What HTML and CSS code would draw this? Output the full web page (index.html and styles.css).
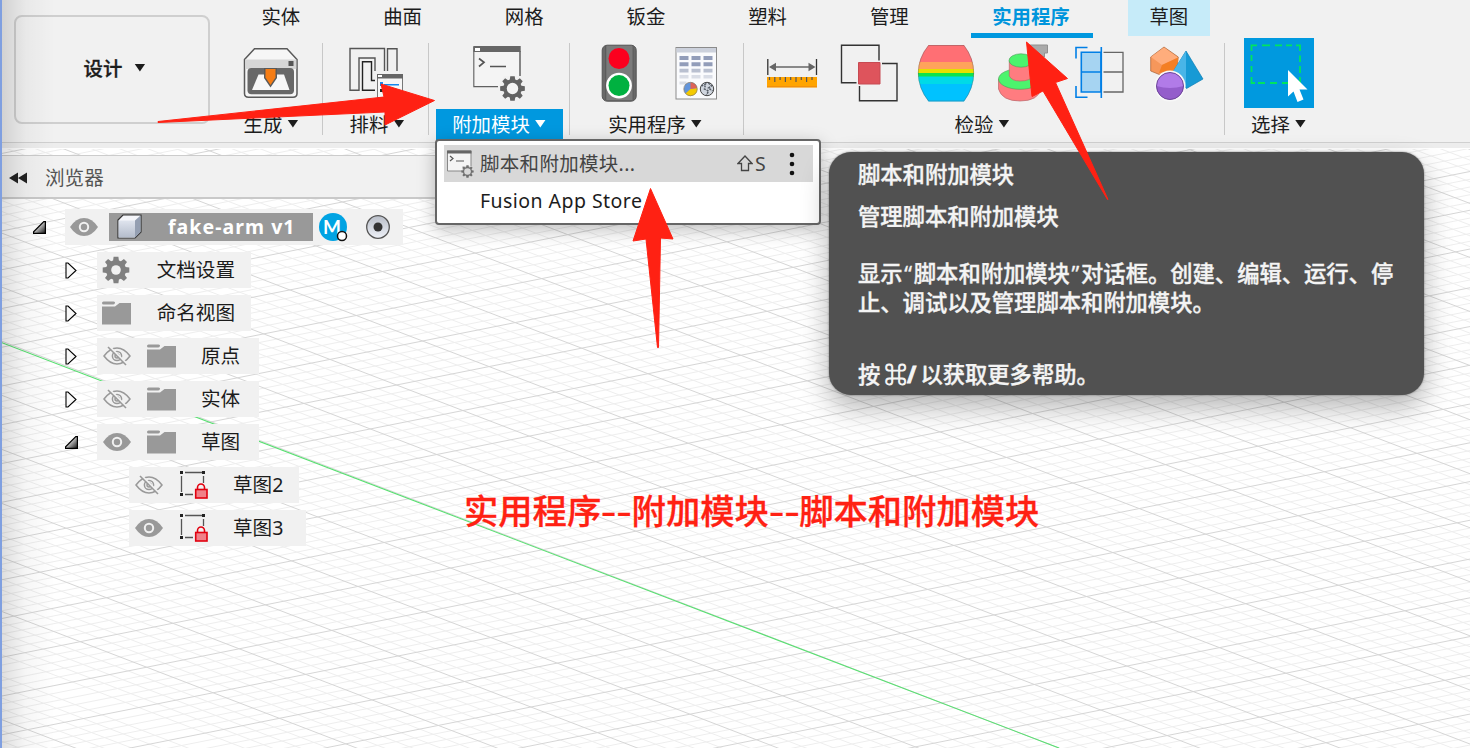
FILE: index.html
```html
<!DOCTYPE html>
<html lang="zh-CN">
<head>
<meta charset="utf-8">
<title>fake-arm v1</title>
<link rel="stylesheet" href="styles.css">
</head>
<body>
<svg width="0" height="0" class="defs">
  <defs>
    <linearGradient id="cubeFace" x1="0" y1="0" x2="0" y2="1"><stop offset="0" stop-color="#dfe4ee"/><stop offset="1" stop-color="#b4bccb"/></linearGradient>
    <linearGradient id="knob" x1="0" y1="0" x2="0" y2="1"><stop offset="0" stop-color="#b9bec8"/><stop offset="1" stop-color="#eef1f8"/></linearGradient>
    <linearGradient id="wedge" x1="0" y1="0" x2="1" y2="1"><stop offset="0.3" stop-color="#eee"/><stop offset="1" stop-color="#111"/></linearGradient>
    <symbol id="eye" viewBox="0 0 28 18"><path d="M0 9Q6 0 14 0T28 9Q22 18 14 18T0 9Z" fill="#999"/><circle cx="14" cy="9" r="4.2" fill="#999" stroke="#f1f1f1" stroke-width="2"/></symbol>
    <symbol id="eyeOff" viewBox="0 0 28 20"><g fill="none" stroke="#999" stroke-width="1.5"><path d="M1 10Q7 2 14 2T27 10Q21 18 14 18T1 10Z"/><circle cx="14" cy="10" r="4.6"/><circle cx="14" cy="10" r="2" /></g><path d="M6.5 0.5L24.5 18.5" stroke="#f1f1f1" stroke-width="2"/><path d="M5 1L23 19" stroke="#999" stroke-width="1.6"/></symbol>
    <symbol id="folder" viewBox="0 0 29 24"><path d="M1.5 0.5H11.5Q13.5 0.5 13 2Q12.500 3.500 11 3.500H1.500Q0 3.500 0 2Q0 0.500 1.500 0.500Z" fill="#999"/><path d="M0 5.500H13L17.500 2H29V23.500H0Z" fill="#999"/></symbol>
    <symbol id="closed" viewBox="0 0 12 17"><path d="M1 1H3L11 8.500L3 16H1Z" fill="#f8f8f8" stroke="#000" stroke-width="1.100"/></symbol>
    <symbol id="open" viewBox="0 0 13 13"><path d="M12.400 0.600V12.400H0.600V10.800L10.800 0.600Z" fill="url(#wedge)" stroke="#000" stroke-width="1.200"/></symbol>
    <symbol id="sketch" viewBox="0 0 30 30"><g stroke="#555" stroke-width="1.300" fill="none"><path d="M6 2.500H24M2.500 6V22M24.500 6V13M6 24.500H14"/></g><path d="M1 1h3v3h-3zM23 1h3v3h-3zM1 23h3v3h-3z" fill="#222"/><path d="M18.500 19V17.500a3.500 3.500 0 0 1 7 0V19" fill="none" stroke="#e2000f" stroke-width="1.600"/><rect x="16.700" y="19.500" width="11.300" height="8.500" fill="#f08088" stroke="#e2000f" stroke-width="1.600"/></symbol>
    <symbol id="gear" viewBox="-14 -14 28 28"><path d="M-2.400-13.300H2.400L2.900-9.600L4.900-8.800L7.900-11L11-7.900L8.800-4.900L9.600-2.900L13.300-2.400V2.400L9.600 2.900L8.800 4.900L11 7.900L7.900 11L4.900 8.800L2.900 9.600L2.400 13.300H-2.400L-2.900 9.600L-4.900 8.800L-7.900 11L-11 7.900L-8.800 4.900L-9.600 2.900L-13.300 2.400V-2.400L-9.600-2.900L-8.800-4.900L-11-7.900L-7.900-11L-4.900-8.800L-2.900-9.600Z"/></symbol>
  </defs>
</svg>

<main class="app">
  <svg class="grid" id="grid" width="1470" height="748" viewBox="0 0 1470 748"></svg>

  <header class="ribbon">
    <button class="workspace">设计 <i class="caret"></i></button>
    <div class="ribbon-body">
      <nav class="tabs">
        <span class="tab">实体</span><span class="tab">曲面</span><span class="tab">网格</span><span class="tab">钣金</span><span class="tab">塑料</span><span class="tab">管理</span><span class="tab active">实用程序</span><span class="tab context">草图</span>
      </nav>
      <div class="groups">
        <section class="group make">
          <div class="icons">
            <svg class="icon" viewBox="240 38 60 70"><path d="M244.500 59.500L254.500 48.700H287L297 59.500V93.500Q297 97.200 293 97.200H248.500Q244.500 97.200 244.500 93.500Z" fill="#f6f6f6" stroke="#595959" stroke-width="1.500"/><path d="M245.200 59.500H296.300V69H245.200Z" fill="#d6d6d6"/><path d="M288.500 61H293.500V66H288.500Z" fill="#555"/><rect x="247.500" y="68" width="46.500" height="26.300" rx="4" fill="#686868"/><path d="M258.500 74.500H284L289.500 90H252Z" fill="#f7f7f7"/><path d="M264 68H277V78L270.500 87.500L264 78Z" fill="#595959"/><path d="M265.500 69H275.500V77.500L270.500 85L265.500 77.500Z" fill="#f57c14"/></svg>
          </div>
          <div class="label">生成<i class="caret"></i></div>
        </section>
        <section class="group nest">
          <div class="icons">
            <svg class="icon" viewBox="346 38 60 70"><g fill="none" stroke="#555" stroke-width="1.400"><path d="M384.500 71V48.500H350V90.300H359V58H375V71"/><path d="M375 90.300H362.500V61.700H371.500V80.500H375" stroke="#222"/><path d="M387.500 71V48.700H397V71" /></g><rect x="377.500" y="74.500" width="25" height="23" fill="#f7f7f7" stroke="#777"/><path d="M377 74H403V78.500H377Z" fill="#666"/><path d="M378 75h4v2h-4z" fill="#fff"/><path d="M380 82H383V86H380ZM384 84H399V85.500H384Z" fill="#1588ee"/><path d="M380 89h3v3h-3z" fill="#222"/></svg>
          </div>
          <div class="label">排料<i class="caret"></i></div>
        </section>
        <section class="group addins">
          <div class="icons">
            <svg class="icon" viewBox="470 38 60 70"><path d="M475 46.500V86.500H499" fill="none" stroke="#606060" stroke-width="1.500"/><path d="M475.500 51H521V76H505L500 86H475.500Z" fill="#f4f4f4"/><path d="M521 51V76" stroke="#606060" stroke-width="1.500"/><path d="M474.500 46H521.700V52H474.500Z" fill="#666"/><path d="M476 48h5v3h-5z" fill="#fff"/><path d="M480 58.500L485 62.300L480 66.500" fill="none" stroke="#555" stroke-width="1.700"/><path d="M491 66.500H507" stroke="#555" stroke-width="1.500"/><use href="#gear" x="500.500" y="75.500" width="26" height="26" fill="#636363"/><circle cx="513.500" cy="88.500" r="5.700" fill="#f4f4f4"/></svg>
          </div>
          <div class="label open">附加模块<i class="caret"></i></div>
        </section>
        <section class="group utility">
          <div class="icons">
            <svg class="icon" viewBox="589.500 38 60 70"><rect x="602.700" y="45.200" width="34" height="56" rx="5" fill="#696969" stroke="#555"/><path d="M606 46V100M633.500 46V100" stroke="#5b5b5b"/><path d="M607 46H633V100H607Z" fill="#7b7b7b"/><circle cx="619.500" cy="58.500" r="10.500" fill="#fb001e"/><circle cx="619.500" cy="85.600" r="12.900" fill="#fff"/><circle cx="619.500" cy="85.600" r="10.500" fill="#00b140"/></svg>
            <svg class="icon" viewBox="666.500 38 60 70"><rect x="676.500" y="47.500" width="40.500" height="51.500" fill="#fafbfd" stroke="#8b8b8b"/><path d="M677 48H716.500V52.500H677Z" fill="#ccd1dc"/><path d="M680 56h9v4h-9zM692 56h9v4h-9zM704 56h9v4h-9zM680 62.300h9v4h-9zM692 62.300h9v4h-9zM704 62.300h9v4h-9z" fill="#929db9"/><path d="M680 68.700h9v3.700h-9zM692 68.700h9v3.700h-9zM704 68.700h9v3.700h-9z" fill="#b9c0d0"/><path d="M680 75h9v3.500h-9zM692 75h9v3.500h-9zM704 75h9v3.500h-9zM680 81.500h7v3h-7z" fill="#d9dde6"/><circle cx="691" cy="89" r="6.700" fill="#6295dc"/><path d="M691 89L697.700 88A6.700 6.700 0 0 1 686 93.600Z" fill="#f4ca00"/><path d="M691 89V82.300A6.700 6.700 0 0 1 697.700 88Z" fill="#df6257"/><circle cx="691" cy="89" r="6.700" fill="none" stroke="#8b7c66" stroke-width="0.700"/><circle cx="707.500" cy="89" r="6.700" fill="#d0d6df" stroke="#444"/><path d="M702 86L706 84L705 89L709 91L707 95M709 83L712 86L709 88L713 91" fill="none" stroke="#555c66" stroke-width="1.500" stroke-dasharray="2 1"/></svg>
          </div>
          <div class="label">实用程序<i class="caret"></i></div>
        </section>
        <section class="group inspect">
          <div class="icons">
            <svg class="icon" viewBox="763 38 60 70"><path d="M768.800 59V75M817.500 59V75" stroke="#333" stroke-width="1.300"/><path d="M772 67H814" stroke="#666" stroke-width="1.500"/><path d="M770 67L777 62.700V71.300ZM816.500 67L809.500 62.700V71.300Z" fill="#666"/><path d="M768 77H818V87.500H768Z" fill="#ffa400"/><path d="M768 86.700H818" stroke="#ee8c12"/><path d="M770.500 77v3M775.800 77v5M781.100 77v3M786.400 77v5M791.700 77v3M797 77v5M802.300 77v3M807.600 77v5M813 77v3" stroke="#555" stroke-width="1.200"/></svg>
            <svg class="icon" viewBox="840 38 60 70"><path d="M857.500 82.800H842.500V45.300H880V60.500M883 63.500H898V100.700H860.500V86" fill="none" stroke="#333" stroke-width="1.400"/><path d="M859.500 62.500H881V84H859.500Z" fill="#de545c" stroke="#c74a52"/></svg>
            <svg class="icon" viewBox="917 38 60 70"><clipPath id="barrel"><path d="M929.500 45H965Q975 58 975 73Q975 88 965 101.500H929.500Q919 88 919 73Q919 58 929.500 45Z"/></clipPath><g clip-path="url(#barrel)"><path d="M917 45h60v18h-60z" fill="#ff6f74"/><path d="M917 62h60v8h-60z" fill="#ffa35b"/><path d="M917 69h60v5h-60z" fill="#e5e000"/><path d="M917 73h60v4h-60z" fill="#0de34c"/><path d="M917 76.500h60v8h-60z" fill="#00dae7"/><path d="M917 84h60v18h-60z" fill="#00c2ff"/></g><path d="M929.500 45.500H965Q974.700 58 974.700 73Q974.700 88 965 101H929.500Q919.300 88 919.300 73Q919.300 58 929.500 45.500Z" fill="none" stroke="#555" stroke-opacity="0.450" stroke-width="0.800"/></svg>
            <svg class="icon" viewBox="994 38 60 70"><path d="M999.500 79V89Q1003 101 1021 101Q1039 101 1042 89V79Z" fill="#ff7c80" stroke="#b9686b" stroke-width="0.700"/><ellipse cx="1021" cy="79" rx="21.500" ry="10.300" fill="#4cf46d" stroke="#4f9a5b" stroke-width="0.600"/><path d="M1010.300 61V76Q1013 81 1021 81Q1031 81 1034 76V61Z" fill="#ff7c80" stroke="#b9686b" stroke-width="0.700"/><ellipse cx="1022" cy="60.500" rx="12" ry="6.700" fill="#4cf46d" stroke="#4f9a5b" stroke-width="0.600"/><path d="M1031 45H1048.500V53H1045.500V57H1042L1038 53Z" fill="#aaa" stroke="#909090"/></svg>
            <svg class="icon" viewBox="1071 38 60 70"><g fill="none" stroke="#007fe6" stroke-width="1.600"><path d="M1077 58.500V47.500H1088.500M1077 86V97.300H1088.500"/><path d="M1082.300 52.300H1102V92H1082.300Z" fill="#a6d4f2"/><path d="M1082 72H1102M1102.300 47V98"/></g><path d="M1104.500 52.300H1124V92H1104.500M1104.500 72H1124" fill="none" stroke="#666" stroke-width="1.300"/></svg>
            <svg class="icon" viewBox="1148 38 60 70"><path d="M1165 47L1179.300 57L1178 68L1164 76L1151.700 71V57Z" fill="#f6975b" stroke="#a86034" stroke-width="0.700"/><path d="M1165 47.500L1179 57.500L1163 65L1152 57Z" fill="#ffad7c"/><path d="M1163 65L1179 57.500L1178 70L1160 73Z" fill="#f47f24"/><path d="M1187 51L1204 79L1187.500 88.500L1174 72Z" fill="#179ad5" stroke="#087cb5" stroke-width="0.700"/><path d="M1187 51V88L1173 73Z" fill="#49b5e8"/><circle cx="1171" cy="86" r="15.500" fill="#f8f8f8"/><circle cx="1171" cy="86" r="13.500" fill="#b17be8"/><path d="M1157.500 86Q1171 90 1184.500 86A13.500 13.500 0 0 1 1157.500 86Z" fill="#945dcb"/><circle cx="1171" cy="86" r="13.500" fill="none" stroke="#6d4698"/></svg>
          </div>
          <div class="label">检验<i class="caret"></i></div>
        </section>
        <section class="group select">
          <div class="icons">
            <svg class="icon wide" viewBox="1243 38 70 70"><path d="M1243 38h70v70h-70z" fill="#0099df"/><path d="M1250.500 51V45.300H1256M1261 45.300H1269M1274 45.300H1281M1285 45.300H1291M1295 45.300H1299V51M1299 55.500V62M1299 66V73M1299 77V83H1293M1288 83H1281M1276 83H1269M1264 83H1257M1254 83H1250.500V77M1250.500 72V66M1250.500 61V55" fill="none" stroke="#00e45f" stroke-width="1.800"/><path d="M1287 70V96.500L1292.500 91.500L1296.500 102L1302.500 99.500L1298.500 89.500H1306.500Z" fill="#fff"/></svg>
          </div>
          <div class="label">选择<i class="caret"></i></div>
        </section>
      </div>
    </div>
  </header>

  <aside class="browser">
    <div class="browser-head"><svg width="19" height="12" viewBox="0 0 19 12"><path d="M9 0.500V11.500L0 6ZM18 0.500V11.500L9 6Z" fill="#222"/></svg>浏览器</div>
    <div class="tree">
      <div class="row lv0"><svg class="arrow" width="13" height="13"><use href="#open"/></svg>
        <div class="chip root"><svg width="28" height="18"><use href="#eye"/></svg>
          <div class="name"><svg width="25" height="26" viewBox="0 0 25 26"><path d="M1 6L6 1H24V18L18 24H1Z" fill="#f5f6fa" stroke="#333" stroke-width="1.200"/><path d="M1.600 6.500H18V23.500H1.600Z" fill="url(#cubeFace)"/><path d="M18 6.500L23.500 1.500V18L18 23.500Z" fill="#949fb2"/></svg><span>fake-arm v1</span></div>
          <svg class="badge" width="29" height="30" viewBox="0 0 29 30"><circle cx="14" cy="15" r="14" fill="#00a3e3"/><text x="13" y="22" class="badge-letter">M</text><circle cx="23" cy="24" r="4.500" fill="#fff" stroke="#111" stroke-width="1.500"/></svg>
          <svg class="radio" width="26" height="26" viewBox="0 0 26 26"><circle cx="13" cy="13" r="11.300" fill="url(#knob)" stroke="#555" stroke-width="1.300"/><circle cx="13" cy="13" r="4.500" fill="#333"/></svg>
        </div></div>
      <div class="row lv1"><svg class="arrow" width="12" height="17"><use href="#closed"/></svg><div class="chip doc"><svg width="28" height="28" viewBox="-14 -14 28 28"><use href="#gear" x="-14" y="-14" width="28" height="28" fill="#808080"/><circle r="4.800" fill="#f1f1f1"/></svg><span>文档设置</span></div></div>
      <div class="row lv1"><svg class="arrow" width="12" height="17"><use href="#closed"/></svg><div class="chip doc"><svg width="29" height="24"><use href="#folder"/></svg><span>命名视图</span></div></div>
      <div class="row lv1"><svg class="arrow" width="12" height="17"><use href="#closed"/></svg><div class="chip item"><svg width="28" height="20"><use href="#eyeOff"/></svg><svg width="29" height="24"><use href="#folder"/></svg><span>原点</span></div></div>
      <div class="row lv1"><svg class="arrow" width="12" height="17"><use href="#closed"/></svg><div class="chip item"><svg width="28" height="20"><use href="#eyeOff"/></svg><svg width="29" height="24"><use href="#folder"/></svg><span>实体</span></div></div>
      <div class="row lv1"><svg class="arrow" width="13" height="13"><use href="#open"/></svg><div class="chip item"><svg width="28" height="18"><use href="#eye"/></svg><svg width="29" height="24"><use href="#folder"/></svg><span>草图</span></div></div>
      <div class="row lv2"><div class="chip leaf"><svg width="28" height="20"><use href="#eyeOff"/></svg><svg width="30" height="30"><use href="#sketch"/></svg><span>草图2</span></div></div>
      <div class="row lv2"><div class="chip leaf last"><svg width="28" height="18"><use href="#eye"/></svg><svg width="30" height="30"><use href="#sketch"/></svg><span>草图3</span></div></div>
    </div>
  </aside>

  <div class="menu">
    <div class="menu-item current"><svg width="28" height="28" viewBox="0 0 28 28"><path d="M0.500 1H24V21H0.500Z" fill="#f4f4f4" stroke="#888"/><path d="M15 16H27V28H15Z" fill="#d9d9d9"/><path d="M0 0.500H24.500V3.500H0Z" fill="#666"/><path d="M3 6L6 8.500L3 11M9 11H17" fill="none" stroke="#555" stroke-width="1.200"/><use href="#gear" x="14" y="15" width="13" height="13" fill="#707070"/><circle cx="20.500" cy="21.500" r="3.300" fill="#d9d9d9"/></svg><span class="menu-text">脚本和附加模块...</span><span class="key"><svg width="16" height="17" viewBox="0 0 16 17"><path d="M8 1L15 8.500H11.500V15.500H4.500V8.500H1Z" fill="none" stroke="#444" stroke-width="1.300"/></svg>S</span><svg class="dots" width="6" height="24" viewBox="0 0 6 24"><circle cx="3" cy="3" r="2.300"/><circle cx="3" cy="12" r="2.300"/><circle cx="3" cy="21" r="2.300"/></svg></div>
    <div class="menu-item"><span class="menu-text store">Fusion App Store</span></div>
  </div>

  <div class="tooltip">
    <p class="title">脚本和附加模块</p>
    <p class="sub">管理脚本和附加模块</p>
    <p class="body">显示<q>“</q>脚本和附加模块<q>”</q>对话框。创建、编辑、运行、停<br>止、调试以及管理脚本和附加模块。</p>
    <p class="help">按 <b>⌘/</b> 以获取更多帮助。</p>
  </div>

  <div class="edge"></div>
  <div class="note">实用程序<i>--</i>附加模块<i>--</i>脚本和附加模块</div>
  <svg class="marks" width="1470" height="748" viewBox="0 0 1470 748"><g fill="#ff2113" stroke="#ff2113" stroke-linejoin="round"><path d="M158 121.500L384 97L381 84L434.500 100.500L385 125L385 112L158 122.500Z"/><path d="M650.500 188.500L673 239L660.500 238L658.500 347.500H657.500L646 239L633 241Z"/><path d="M1026.500 42L1067.500 78.500L1055.500 82.500L1108 199.500H1107.500L1043 91L1032 96.500Z"/></g></svg>
</main>
<script src="grid.js"></script>
</body>
</html>
```
FILE: styles.css
```css
* { box-sizing: border-box; }
body { margin: 0; background: #fff; font-family: "Noto Sans", "Noto Sans CJK SC", sans-serif; color: #1c1c1c; }
.defs { position: absolute; }
.app { position: relative; width: 1470px; height: 748px; overflow: hidden; display: flex; flex-direction: column; }
.grid { position: absolute; left: 0; top: 0; }
.grid path { fill: none; stroke-width: 1; }
.grid .minor { stroke: #eee; }
.grid .major { stroke: #d6d6d6; }
.grid .axis { stroke: #57e070; stroke-width: 1.100; }

.ribbon { position: relative; height: 149px; flex: none; display: flex; background: linear-gradient(#f1f1f1 0 142px, #d0d0d0 142px 143px, #ededed 143px 148px, #fff 148px); font-family: "Noto Sans CJK SC", sans-serif; font-size: 19.400px; }
.workspace { margin: 15px 0 0 14px; width: 196px; height: 109px; border: 2px solid #cfcfcf; border-radius: 8px; background: #f1f1f1; padding: 0 0 4px 5px; font: 500 19.400px "Noto Sans CJK SC", sans-serif; color: #1c1c1c; display: flex; align-items: center; justify-content: center; gap: 12px; -webkit-text-stroke: .3px; }
.caret { width: 11px; height: 8px; background: currentColor; clip-path: polygon(0 0, 100% 0, 50% 100%); }
.ribbon-body { padding-left: 8px; display: flex; flex-direction: column; }
.tabs { display: flex; height: 38px; padding-left: 2px; }
.tab { width: 121.700px; height: 36px; text-align: center; line-height: 31px; }
.tab.active { margin-left: 21px; height: 38px; color: #0095dc; font-weight: 700; border-bottom: 5px solid #0098df; padding-right: 2px; }
.tab.context { margin-left: 35px; width: 82px; background: #c6ebf9; }
.groups { display: flex; height: 102px; }
.group { position: relative; display: flex; flex-direction: column; align-items: center; }
.group:not(.select)::after { content: ""; position: absolute; right: 0; top: 5px; width: 1px; height: 92px; background: #c8c8c8; }
.make { width: 105px; padding-right: 2px; }
.nest { width: 106px; padding-right: 1px; }
.addins { width: 141px; padding-right: 1px; }
.utility { width: 174px; }
.inspect { width: 481px; }
.select { width: 107px; }
.icons { display: flex; gap: 17px; height: 71px; }
.icon { width: 60px; height: 70px; }
.icon.wide { width: 70px; }
.label { display: flex; align-items: center; justify-content: center; height: 31px; padding-bottom: 2px; gap: 5px; white-space: nowrap; }
.make .label, .nest .label { padding-left: 3px; }
.utility .label { padding-right: 4px; }
.inspect .label { padding-right: 5px; }
.label.open { width: 127px; background: #0098df; color: #fff; }

.browser { position: relative; margin-top: 6px; }
.browser-head { width: 600px; height: 44px; background: #f1f1f1; border-top: 1px solid #ccc; border-bottom: 2px solid #c9c9c9; display: flex; align-items: center; gap: 17px; padding-left: 9px; font-family: "Noto Sans CJK SC", sans-serif; font-size: 19.600px; color: #555; }
.browser-head svg { margin-top: 3px; }
.tree { margin-top: 10px; display: flex; flex-direction: column; gap: 7px; font-size: 19.600px; font-family: "Noto Sans", "Noto Sans CJK SC", sans-serif; }
.row { display: flex; align-items: center; height: 36px; }
.arrow { flex: none; }
.lv0 { padding-left: 33px; gap: 19px; }
.lv1 { padding-left: 65px; }
.lv1 .chip { margin-left: auto; }
.row.lv1 { width: 260px; }
.lv2 { padding-left: 129px; }
.chip { height: 36px; background: #f1f1f1; display: flex; align-items: center; white-space: nowrap; line-height: 34px; flex: none; }
.chip.root { width: 338px; padding-left: 5px; }
.name { margin-left: 11px; width: 204px; height: 28px; background: #999; color: #fff; font-weight: 700; font-size: 19.500px; letter-spacing: 1.050px; display: flex; align-items: center; gap: 26px; padding-left: 8px; line-height: 26px; }
.badge { margin-left: 6px; }
.badge-letter { font-family: Lato, sans-serif; font-weight: 700; font-size: 19px; text-anchor: middle; fill: #fff; }
.radio { margin-left: 17px; }
.lv1 .chip.doc { margin-left: 0; width: 154px; padding-left: 5px; }
.doc span { margin-left: auto; margin-right: 16px; }
.lv1:has(.doc) { gap: 20px; }
.lv1 .chip.item { margin-left: auto; margin-right: 1px; width: 162px; padding-left: 6px; gap: 16px; }
.item span { margin-left: 9px; }
.chip.leaf { width: 170px; padding-left: 6px; gap: 16px; }
.leaf span { margin-left: 8px; }
.leaf.last { width: 177px; }

.menu { position: absolute; left: 435px; top: 139px; width: 386px; height: 86px; background: #fff; border: 2px solid #666; border-radius: 4px; padding: 4px 6px 0 7px; box-shadow: 0 5px 18px rgba(0,0,0,.26); }
.menu-item { position: relative; height: 37px; display: flex; align-items: center; padding-left: 3px; font: 19.500px "Noto Sans", "Noto Sans CJK SC", sans-serif; color: #1c1c1c; }
.menu-item.current { background: #d8d8d8; color: #444; }
.menu-item.current .menu-text { margin-left: 5px; width: 257px; padding-bottom: 2px; letter-spacing: 0.300px; }
.key { display: flex; align-items: center; gap: 2px; width: 52px; }
.dots { fill: #111; }
.store { margin-left: 33px; letter-spacing: 0.450px; }

.tooltip { position: absolute; left: 829px; top: 152px; width: 595px; height: 243px; border-radius: 22px; background: #515151; color: #f4f4f4; padding: 8px 0 0 29px; font: 500 22.300px/29px "Open Sans", "Noto Sans CJK SC", sans-serif; -webkit-text-stroke: .35px; box-shadow: 0 12px 28px rgba(0,0,0,.3), 0 0 2px rgba(0,0,0,.5); white-space: nowrap; }
.tooltip p { margin: 0; }
.tooltip q { quotes: none; letter-spacing: 1.700px; margin-left: 1.700px; }
.tooltip .sub { margin-top: 13px; }
.tooltip .body { margin-top: 28px; }
.tooltip .help { margin-top: 43px; word-spacing: -1.500px; }
.tooltip b { -webkit-text-stroke: .9px; }

.edge { position: absolute; left: 0; top: 0; width: 55px; height: 748px; border-left: 2px solid #7f9fe0; background: linear-gradient(90deg, rgba(0,0,0,.13), rgba(0,0,0,.035) 45%, transparent); }
.note { position: absolute; left: 464px; top: 484px; font: 500 34.300px/50px "Noto Sans CJK SC", sans-serif; color: #ff2113; white-space: nowrap; -webkit-text-stroke: .3px; }
.note i { display: inline-block; width: 24px; margin: 0 3.200px; font-style: normal; transform: scaleX(1.280); }
.marks { position: absolute; left: 0; top: 0; }
```
FILE: grid.js
```js
// Ground plane: two families of parallel lines, every fifth one is major.
const ax = 92.62, ay = -18.42, bx = 66.4, by = 25.55;
const ox = 199, oy = 579.3, reach = 40;
const paths = { minor: "", major: "" };
for (let n = -150; n <= 150; n++) {
  const t = n / 5;
  const kind = n % 5 === 0 ? "major" : "minor";
  const line = (px, py, dx, dy) =>
    `M${(px - dx * reach).toFixed(1)} ${(py - dy * reach).toFixed(1)}L${(px + dx * reach).toFixed(1)} ${(py + dy * reach).toFixed(1)}`;
  paths[kind] += line(ox + bx * t, oy + by * t, ax, ay);
  if (n !== -15) paths[kind] += line(ox + ax * t, oy + ay * t, bx, by);
}
const grid = document.getElementById("grid");
grid.innerHTML =
  `<path class="minor" d="${paths.minor}"/><path class="major" d="${paths.major}"/>` +
  `<path class="axis" d="M0 342L1059 748"/>`;
```
